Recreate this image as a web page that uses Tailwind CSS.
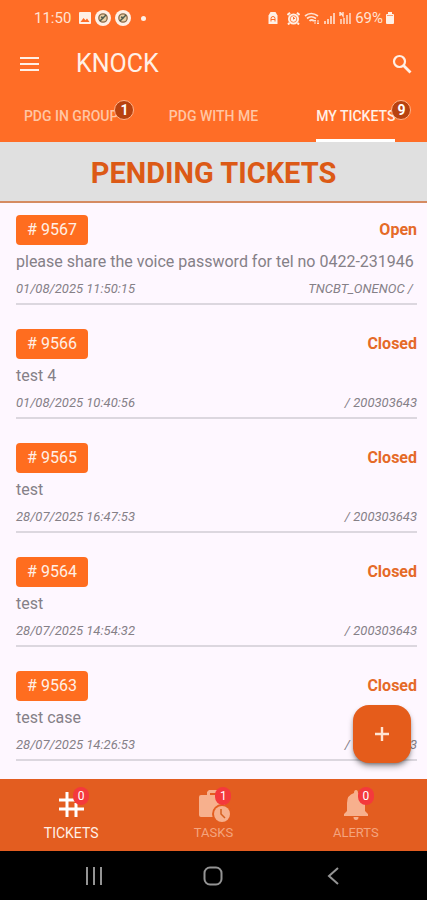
<!DOCTYPE html>
<html lang="en">
<head>
<meta charset="utf-8">
<meta name="viewport" content="width=device-width, initial-scale=1">
<title>Knock</title>
<script src="https://cdn.jsdelivr.net/npm/@tailwindcss/browser@4"></script>
</head>
<body class="flex h-screen flex-col overflow-hidden bg-[#fef7ff] font-[Roboto,sans-serif] text-[#858087]">
<header class="shrink-0 bg-[#ff6d26] text-[#fff0e6]">
  <div class="flex h-9 items-center justify-between pr-8 pl-[34px] text-[15px] text-[#ffe3d3]">
    <div class="flex items-center gap-1">
      <span class="mr-1">11:50</span>
      <svg class="size-3" viewBox="0 0 12 12"><rect width="12" height="12" rx="1" fill="#fff0e6"/><path d="M1.500 10l3-4 2 2.300 1.500-1.800L10.500 10z" fill="#ff6d26"/></svg>
      <svg class="size-4" viewBox="0 0 16 16"><circle cx="8" cy="8" r="8" fill="#fff0e6"/><circle cx="8" cy="8" r="4.200" fill="#e8cfa4" stroke="#8a6a4a" stroke-width="1.300"/><path d="M5 11l6-6M6 7l3 1" stroke="#4e5c4f" stroke-width="1.500"/></svg>
      <svg class="size-4" viewBox="0 0 16 16"><circle cx="8" cy="8" r="8" fill="#fff0e6"/><circle cx="8" cy="8" r="4.200" fill="#e8cfa4" stroke="#8a6a4a" stroke-width="1.300"/><path d="M5 11l6-6M6 7l3 1" stroke="#4e5c4f" stroke-width="1.500"/></svg>
      <span class="flex size-4 items-center justify-center"><span class="size-[5px] rounded-full bg-[#fff0e6]"></span></span>
    </div>
    <div class="flex items-center gap-1">
      <svg class="mr-1 h-3 w-3" viewBox="0 0 12 12"><path d="M1.500 3.500l2-3.500h5l2 3.500V12h-9z" fill="#fff0e6"/><path d="M4 9.500V6.500a2 2 0 014 0v3M4 7.500h4" stroke="#ff6d26" fill="none"/></svg>
      <svg class="size-[13px]" viewBox="0 0 13 13"><circle cx="6.500" cy="7" r="5.500" fill="#fff0e6"/><path d="M.5 3L3 .8M12.500 3L10 .8M2.500 11l-1.500 1.500M10.500 11l1.500 1.500" stroke="#fff0e6" stroke-width="2"/><circle cx="6.500" cy="7" r="3.300" fill="none" stroke="#ff8a50"/><path d="M6.500 5v2.200L8 6" stroke="#ff6d26" fill="none"/></svg>
      <svg class="h-3 w-4" viewBox="0 0 16 12"><path d="M1 4q6-5 13 0M3 6.500q4-3.500 9 0M5.500 9q2-2 4.500 0" fill="none" stroke="currentColor" stroke-width="1.700"/><path d="M11 8v4M14 12V8M10 9l1-1 1 1M13 11l1 1 1-1" stroke="currentColor" fill="none"/></svg>
      <svg class="h-3 w-[11px]" viewBox="0 0 11 12"><path d="M1 12V9M4 12V7M7 12V4M10 12V1" stroke="currentColor" stroke-width="1.600"/></svg>
      <svg class="h-3 w-3" viewBox="0 0 12 12"><path d="M2 12V7M5 12V6M8 12V3M11 12V1M1 4V0l3 4V0" stroke="currentColor" stroke-width="1.400" fill="none"/></svg>
      <span>69%</span>
      <svg class="-ml-0.5 h-3 w-2.5" viewBox="0 0 10 12"><path d="M3 0h4v2h1q1 0 1 1v8q0 1-1 1H2q-1 0-1-1V3q0-1 1-1h1z" fill="#fff0e6"/><path d="M2 3.500h6" stroke="#ff9b6b"/></svg>
    </div>
  </div>
  <div class="flex h-14 items-center pr-[15px] pl-5">
    <button type="button" aria-label="Open menu"><svg class="h-4 w-5" viewBox="0 0 20 16"><path d="M0 2h19M0 8h19M0 14h19" stroke="currentColor" stroke-width="2"/></svg></button>
    <h1 class="ml-9 text-[25px]">KNOCK</h1>
    <button type="button" aria-label="Search" class="ml-auto"><svg class="size-5" viewBox="0 0 20 20" fill="none" stroke="currentColor"><circle cx="7.500" cy="7.500" r="5.500" stroke-width="2.200"/><path d="M11.500 11.500l7 7" stroke-width="2.800"/></svg></button>
  </div>
  <nav aria-label="Ticket groups" class="grid h-[50px] grid-cols-3 text-sm leading-5 font-medium">
    <a href="#group" class="flex justify-center text-[#ffc6a4]"><span class="relative pt-3.5">PDG IN GROUP<span class="absolute top-2 -right-4 flex size-5 items-center justify-center rounded-full border border-[#ffb28a] bg-[#b8420f] font-bold text-white">1</span></span></a>
    <a href="#me" class="flex justify-center text-[#ffc6a4]"><span class="pt-3.5">PDG WITH ME</span></a>
    <a href="#mine" aria-current="page" class="flex justify-center"><span class="relative border-b-3 border-white pt-3.5">MY TICKETS<span class="absolute top-2 -right-4 flex size-5 items-center justify-center rounded-full border border-[#ffb28a] bg-[#b8420f] font-bold text-white">9</span></span></a>
  </nav>
</header>
<main class="relative flex min-h-0 flex-1 flex-col">
  <h2 class="flex h-[61px] shrink-0 items-center justify-center border-b-2 border-[#d58b62] bg-[#e0e0e0] pt-1 text-[29px] font-bold text-[#dc5a16]">PENDING TICKETS</h2>
  <ul class="min-h-0 flex-1 overflow-hidden pr-2.5 pl-4">
    <li class="py-3">
      <div class="flex items-center justify-between"><a href="#9567" class="flex h-[30px] w-[72px] items-center justify-center rounded bg-[#ff6d1f] text-base text-[#fff0e6]"># 9567</a><span class="text-base font-bold text-[#e56a28]">Open</span></div>
      <p class="mt-[5px] text-base leading-6 whitespace-nowrap">please share the voice password for tel no 0422-231946</p>
      <div class="flex justify-between border-b-2 border-[#dcd7df] py-[5px] text-[13px] leading-[19px] italic"><time>01/08/2025 11:50:15</time><span class="pr-1">TNCBT_ONENOC /</span></div>
    </li>
    <li class="py-3">
      <div class="flex items-center justify-between"><a href="#9566" class="flex h-[30px] w-[72px] items-center justify-center rounded bg-[#ff6d1f] text-base text-[#fff0e6]"># 9566</a><span class="text-base font-bold text-[#e56a28]">Closed</span></div>
      <p class="mt-[5px] text-base leading-6 whitespace-nowrap">test 4</p>
      <div class="flex justify-between border-b-2 border-[#dcd7df] py-[5px] text-[13px] leading-[19px] italic"><time>01/08/2025 10:40:56</time><span>/ 200303643</span></div>
    </li>
    <li class="py-3">
      <div class="flex items-center justify-between"><a href="#9565" class="flex h-[30px] w-[72px] items-center justify-center rounded bg-[#ff6d1f] text-base text-[#fff0e6]"># 9565</a><span class="text-base font-bold text-[#e56a28]">Closed</span></div>
      <p class="mt-[5px] text-base leading-6 whitespace-nowrap">test</p>
      <div class="flex justify-between border-b-2 border-[#dcd7df] py-[5px] text-[13px] leading-[19px] italic"><time>28/07/2025 16:47:53</time><span>/ 200303643</span></div>
    </li>
    <li class="py-3">
      <div class="flex items-center justify-between"><a href="#9564" class="flex h-[30px] w-[72px] items-center justify-center rounded bg-[#ff6d1f] text-base text-[#fff0e6]"># 9564</a><span class="text-base font-bold text-[#e56a28]">Closed</span></div>
      <p class="mt-[5px] text-base leading-6 whitespace-nowrap">test</p>
      <div class="flex justify-between border-b-2 border-[#dcd7df] py-[5px] text-[13px] leading-[19px] italic"><time>28/07/2025 14:54:32</time><span>/ 200303643</span></div>
    </li>
    <li class="py-3">
      <div class="flex items-center justify-between"><a href="#9563" class="flex h-[30px] w-[72px] items-center justify-center rounded bg-[#ff6d1f] text-base text-[#fff0e6]"># 9563</a><span class="text-base font-bold text-[#e56a28]">Closed</span></div>
      <p class="mt-[5px] text-base leading-6 whitespace-nowrap">test case</p>
      <div class="flex justify-between border-b-2 border-[#dcd7df] py-[5px] text-[13px] leading-[19px] italic"><time>28/07/2025 14:26:53</time><span>/ 200303643</span></div>
    </li>
  </ul>
  <button type="button" aria-label="New ticket" class="absolute right-4 bottom-4 flex size-[58px] items-center justify-center rounded-2xl bg-[#e55c1b] text-[#ffe4d3] shadow-md shadow-black/40"><svg class="size-4" viewBox="0 0 16 16"><path d="M8 1v14M1 8h14" stroke="currentColor" stroke-width="2.400"/></svg></button>
</main>
<nav aria-label="Main" class="grid h-[72px] shrink-0 grid-cols-3 bg-[#e35d20] text-[13px] leading-5 text-[#f4a47e]">
  <a href="#tickets" aria-current="page" class="flex flex-col items-center pt-2 text-sm text-[#fff0e6]">
    <span class="relative"><svg class="size-9" viewBox="0 0 36 36"><path d="M14 5v25M23 16v14M6 13h17M6 22h25" stroke="#fff" stroke-width="3"/></svg><span class="absolute top-0 right-0 flex h-[18px] w-4 items-center justify-center rounded-full bg-[#f4393c] text-xs text-white">0</span></span>
    <span>TICKETS</span>
  </a>
  <a href="#tasks" class="flex flex-col items-center pt-2">
    <span class="relative"><svg class="size-9" viewBox="0 0 36 36"><path d="M6 8h6V5l2-2h8l2 2v3h6v22H6q-2 0-2-2V10q0-2 2-2zm9 0h6V6h-6z" fill="#f7b08d" fill-rule="evenodd"/><circle cx="27" cy="27" r="10" fill="#e35d20"/><circle cx="27" cy="27" r="8" fill="#f7b08d"/><path d="M26 22v5l4 4" stroke="#d5601f" stroke-width="1.500" fill="none"/></svg><span class="absolute top-0 right-0 flex h-[18px] w-4 items-center justify-center rounded-full bg-[#f4393c] text-xs text-white">1</span></span>
    <span>TASKS</span>
  </a>
  <a href="#alerts" class="flex flex-col items-center pt-2">
    <span class="relative"><svg class="size-9" viewBox="0 0 36 36" fill="#f7b08d"><path d="M18 3q2 0 2 3 7 2 7 10v8l3 3v2H6v-2l3-3v-8q0-8 7-10 0-3 2-3zM15.500 30h5q0 3-2.500 3t-2.500-3z"/></svg><span class="absolute top-0 right-0 flex h-[18px] w-4 items-center justify-center rounded-full bg-[#f4393c] text-xs text-white">0</span></span>
    <span>ALERTS</span>
  </a>
</nav>
<div class="grid h-[49px] shrink-0 grid-cols-3 bg-black px-[34px] text-[#949494]">
  <button type="button" aria-label="Recent apps" class="flex items-center justify-center"><svg class="h-5 w-[18px]" viewBox="0 0 18 20"><path d="M2 1v18M9 1v18M16 1v18" stroke="currentColor" stroke-width="2"/></svg></button>
  <button type="button" aria-label="Home" class="flex items-center justify-center"><svg class="size-5" viewBox="0 0 20 20"><rect x="1.500" y="1.500" width="17" height="17" rx="5.500" fill="none" stroke="currentColor" stroke-width="2"/></svg></button>
  <button type="button" aria-label="Back" class="flex items-center justify-center"><svg class="h-5 w-3" viewBox="0 0 12 20"><path d="M11 2L2 10l9 8" fill="none" stroke="currentColor" stroke-width="2"/></svg></button>
</div>
</body>
</html>
